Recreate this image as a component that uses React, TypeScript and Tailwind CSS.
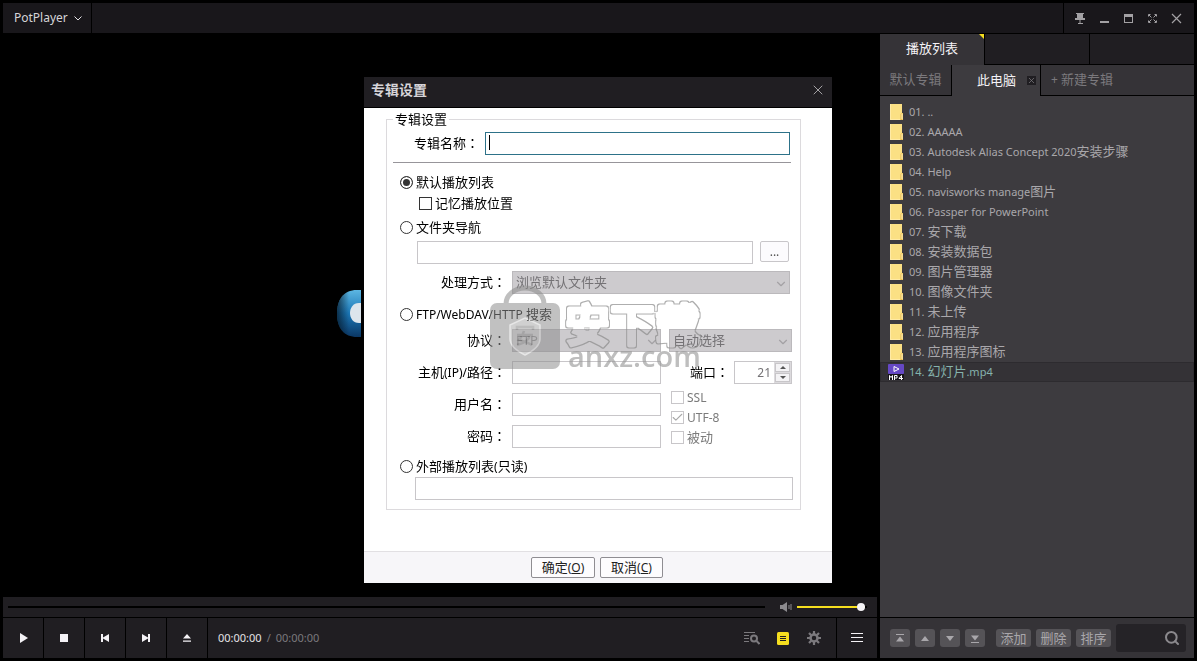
import { useState } from "react";
import type { ReactNode } from "react";
import { Check, ChevronDown, Search, X } from "lucide-react";

const playlist = [
  "..",
  "AAAAA",
  "Autodesk Alias Concept 2020安装步骤",
  "Help",
  "navisworks manage图片",
  "Passper for PowerPoint",
  "安下载",
  "安装数据包",
  "图片管理器",
  "图像文件夹",
  "未上传",
  "应用程序",
  "应用程序图标",
  "幻灯片.mp4",
];

const fieldClass =
  "h-[23px] border border-[#c8c6c9] bg-white px-1 text-[12px] outline-none";
const radioClass =
  "size-[13px] shrink-0 appearance-none rounded-full border border-[#333] bg-white checked:bg-[#333] checked:shadow-[inset_0_0_0_2px_white]";

// Latin runs are set smaller than the Chinese text around them
const Mixed = ({
  children,
  latin = "text-[12px]",
}: {
  children: string;
  latin?: string;
}) => (
  <>
    {children.split(/([\x20-\x7e]+)/).map((part, i) =>
      i % 2 ? (
        <span key={i} className={latin}>
          {part}
        </span>
      ) : (
        part
      ),
    )}
  </>
);

const FieldLabel = ({ id, text }: { id: string; text: string }) => (
  <label htmlFor={id} className="h-5 text-right whitespace-nowrap">
    <Mixed>{text}</Mixed>
    <span className="font-['Noto_Sans_CJK_TC',sans-serif] leading-none">：</span>
  </label>
);

interface RadioRowProps {
  value: string;
  mode: string;
  onSelect: (value: string) => void;
  label: string;
}

const RadioRow = ({ value, mode, onSelect, label }: RadioRowProps) => (
  <label className="ml-[13px] flex h-5 items-center gap-[3px]">
    <input
      type="radio"
      name="mode"
      className={radioClass}
      checked={mode === value}
      onChange={() => onSelect(value)}
    />
    <span>
      <Mixed>{label}</Mixed>
    </span>
  </label>
);

const DisabledSelect = ({
  id,
  label,
  option,
}: {
  id: string;
  label?: string;
  option: string;
}) => (
  <div className="relative h-[23px]">
    <select
      id={id}
      aria-label={label}
      disabled
      className="h-full w-full appearance-none border border-[#bbb9bc] bg-[#cdcbce] px-[3px] pb-px text-[13px] text-[#747275] opacity-100"
    >
      <option>{option}</option>
    </select>
    <ChevronDown
      className="pointer-events-none absolute top-[6px] right-[2px] size-[14px] text-[#a3a1a4]"
      strokeWidth={2}
    />
  </div>
);

const DisabledCheck = ({
  label,
  checked = false,
}: {
  label: string;
  checked?: boolean;
}) => (
  <label className="flex h-5 items-center gap-[3px] text-[#7b7b7b]">
    <span className="relative size-[13px]">
      <input
        type="checkbox"
        disabled
        defaultChecked={checked}
        className="block size-[13px] appearance-none border border-[#c8c6c9] bg-white"
      />
      {checked && (
        <Check className="absolute inset-0 size-[13px] text-[#a9a9a9]" />
      )}
    </span>
    <span>
      <Mixed>{label}</Mixed>
    </span>
  </label>
);

const Watermark = () => (
  <svg
    className="pointer-events-none absolute top-[210px] left-[124px] h-[100px] w-[230px] overflow-visible"
    viewBox="0 0 230 100"
    aria-hidden="true"
  >
    <filter id="outline">
      <feMorphology in="SourceGraphic" operator="erode" radius="1" result="inner" />
      <feComposite in="SourceGraphic" in2="inner" operator="out" />
    </filter>
    <text
      x="77"
      y="55"
      fontSize="45"
      fontWeight="700"
      fill="#8c8c8c"
      stroke="#8c8c8c"
      strokeWidth="5"
      strokeLinejoin="round"
      opacity="0.7"
      filter="url(#outline)"
      className="font-['Noto_Sans_CJK_SC',sans-serif]"
    >
      安下载
    </text>
    <g opacity="0.55">
      <path d="M18 17a19 16 0 0 1 38 0" fill="none" stroke="#8a8a8a" strokeWidth="5" />
      <rect x="2" y="16" width="70" height="66" rx="7" fill="#8f8f8f" />
      <path
        d="M37 31l15 7v14c0 7-7 12-15 16-8-4-15-9-15-16V38z"
        fill="#a9a9a9"
        stroke="#d2d2d2"
        strokeWidth="1.500"
      />
      <path
        d="M29 43v-3h16v3M29 48h16M36 44c-1 4-3 7-5 9 5 1 9 3 13 5M42 48c-1 5-5 8-13 10"
        fill="none"
        stroke="#858585"
        strokeWidth="2.500"
      />
    </g>
    <text
      x="80"
      y="80"
      fontSize="29"
      fontWeight="600"
      fill="#9b9b9b"
      opacity="0.65"
      className="font-['Open_Sans',sans-serif]"
    >
      anxz.com
    </text>
  </svg>
);

const AlbumDialog = () => {
  const [mode, setMode] = useState("default");
  const [remember, setRemember] = useState(false);

  return (
    <div className="pointer-events-none fixed inset-0 flex items-center justify-center pr-px pb-px">
      <section
        role="dialog"
        aria-labelledby="dialog-title"
        className="pointer-events-auto relative flex w-[468px] flex-col bg-white text-[13px] leading-[18px] text-black shadow-[0_0_0_3px_black]"
      >
        <header className="flex h-[31px] items-center justify-between border-b border-black bg-[#201e22] pr-[6px] pb-1 pl-[7px]">
          <h1 id="dialog-title" className="text-[14px] font-bold text-[#d6d4d8]">
            专辑设置
          </h1>
          <button type="button" aria-label="关闭" className="text-[#a3a1a4]">
            <X className="size-4" strokeWidth={1.5} />
          </button>
        </header>

        <fieldset className="mt-[2px] mr-[31px] mb-[41px] ml-[22px] border border-[#dcdadd] pb-[9px]">
          <legend className="ml-[6px] px-[2px]">专辑设置</legend>

          <div className="mt-1 mr-[10px] flex items-center gap-[6px] pl-[27px]">
            <FieldLabel id="album-name" text="专辑名称" />
            <div className="relative flex flex-1">
              <input
                id="album-name"
                className="h-[23px] w-full border border-[#2d7289] bg-white px-1 caret-transparent outline-none"
              />
              <span className="absolute top-[3px] left-[4px] h-[15px] w-px bg-black" />
            </div>
          </div>
          <hr className="mt-[7px] mr-[9px] ml-[6px] border-[#97959a]" />

          <div className="mt-[9px]">
            <RadioRow
              value="default"
              mode={mode}
              onSelect={setMode}
              label="默认播放列表"
            />
          </div>
          <label className="mt-px ml-8 flex h-5 items-center gap-[3px]">
            <input
              type="checkbox"
              className="size-[13px] appearance-none border border-[#333] bg-white checked:bg-[#333]"
              checked={remember}
              onChange={() => setRemember(!remember)}
            />
            记忆播放位置
          </label>

          <div className="mt-1">
            <RadioRow
              value="folder"
              mode={mode}
              onSelect={setMode}
              label="文件夹导航"
            />
          </div>
          <div className="mt-1 mr-[11px] ml-[30px] flex gap-[7px]">
            <input
              aria-label="文件夹"
              disabled
              className={`${fieldClass} min-w-0 flex-1`}
            />
            <button
              type="button"
              className="h-[21px] w-[29px] rounded-[2px] border border-[#c8c6c9] bg-[#fcfbfd] text-[12px] leading-none text-[#555]"
            >
              ...
            </button>
          </div>
          <div className="mt-[7px] mr-[10px] grid grid-cols-[119px_1fr] items-center gap-[6px]">
            <FieldLabel id="handling" text="处理方式" />
            <DisabledSelect id="handling" option="浏览默认文件夹" />
          </div>

          <div className="mt-[10px]">
            <RadioRow
              value="remote"
              mode={mode}
              onSelect={setMode}
              label="FTP/WebDAV/HTTP 搜索"
            />
          </div>
          <div className="mt-[5px] mr-2 grid grid-cols-[119px_149px_1fr] items-center gap-x-[6px]">
            <FieldLabel id="protocol" text="协议" />
            <DisabledSelect id="protocol" option="FTP" />
            <div className="pl-[2px]">
              <DisabledSelect id="encoding" label="编码" option="自动选择" />
            </div>
          </div>

          <div className="mt-[9px] mr-2 flex">
            <div className="grid grid-cols-[119px_149px] items-center gap-x-[6px] gap-y-[9px]">
              <FieldLabel id="host" text="主机(IP)/路径" />
              <input id="host" disabled className={fieldClass} />
              <FieldLabel id="user" text="用户名" />
              <input id="user" disabled className={fieldClass} />
              <FieldLabel id="password" text="密码" />
              <input
                id="password"
                type="password"
                disabled
                className={fieldClass}
              />
            </div>
            <div className="flex-1">
              <div className="flex items-center justify-end gap-[5px]">
                <FieldLabel id="port" text="端口" />
                <div className="flex h-[23px] w-[58px] border border-[#c8c6c9]">
                  <input
                    id="port"
                    disabled
                    defaultValue="21"
                    className="w-0 flex-1 pr-[3px] text-right text-[12px] text-[#747275]"
                  />
                  <div className="flex w-[17px] flex-col gap-px bg-[#dcdadd] p-px">
                    <button
                      type="button"
                      aria-label="增加"
                      className="flex flex-1 items-center justify-center border border-[#c8c6c9] bg-[#f4f3f5]"
                    >
                      <svg viewBox="0 0 6 3" className="h-[3px] w-[6px]">
                        <path d="M0 3L3 0l3 3z" fill="#555" />
                      </svg>
                    </button>
                    <button
                      type="button"
                      aria-label="减少"
                      className="flex flex-1 items-center justify-center border border-[#c8c6c9] bg-[#f4f3f5]"
                    >
                      <svg viewBox="0 0 6 3" className="h-[3px] w-[6px]">
                        <path d="M0 0l3 3 3-3z" fill="#555" />
                      </svg>
                    </button>
                  </div>
                </div>
              </div>
              <div className="mt-[3px] ml-[10px]">
                <DisabledCheck label="SSL" />
                <DisabledCheck label="UTF-8" checked />
                <DisabledCheck label="被动" />
              </div>
            </div>
          </div>

          <div className="mt-2">
            <RadioRow
              value="external"
              mode={mode}
              onSelect={setMode}
              label="外部播放列表(只读)"
            />
          </div>
          <div className="mt-px mr-[7px] ml-7 flex">
            <input
              aria-label="外部播放列表"
              disabled
              className={`${fieldClass} w-full`}
            />
          </div>
        </fieldset>

        <footer className="flex h-8 items-center justify-center gap-[5px] border-t border-[#e2e0e3] bg-[#f7f6f9] pr-[2px]">
          <button
            type="button"
            className="h-[21px] w-16 rounded-[2px] border border-[#8f8d92] bg-[#fdfcfe] leading-none text-[#222]"
          >
            确定<span className="text-[12px]">(<u>O</u>)</span>
          </button>
          <button
            type="button"
            className="h-[21px] w-[63px] rounded-[2px] border border-[#8f8d92] bg-[#fdfcfe] leading-none text-[#222]"
          >
            取消<span className="text-[12px]">(<u>C</u>)</span>
          </button>
        </footer>
        <Watermark />
      </section>
    </div>
  );
};

interface IconButtonProps {
  label: string;
  className: string;
  children: ReactNode;
}

const IconButton = ({ label, className, children }: IconButtonProps) => (
  <button
    type="button"
    aria-label={label}
    className={`flex items-center justify-center ${className}`}
  >
    {children}
  </button>
);

const TitleBar = () => (
  <header className="flex h-[30px] bg-[#19171b]">
    <button
      type="button"
      className="flex items-center gap-[6px] border-r border-black pr-[9px] pl-[11px] text-[12px] text-[#d6d4d8]"
    >
      PotPlayer
      <svg viewBox="0 0 8 5" className="h-[5px] w-2" fill="none" stroke="#e4e2e6">
        <path d="M.5.5L4 4 7.500.5" />
      </svg>
    </button>
    <div className="ml-auto flex border-l border-black pr-[6px] pl-1 text-[#a3a1a4]">
      <IconButton label="置顶" className="w-6">
        <svg viewBox="0 0 12 12" className="size-3" fill="currentColor">
          <path d="M2 1h8v1H9v4h2v2H6.500v3H9v1H4v-1h1.500V8H1V6h2V2H2z" />
        </svg>
      </IconButton>
      <IconButton label="最小化" className="w-6">
        <svg viewBox="0 0 12 12" className="size-3" fill="currentColor">
          <path d="M2 9h9v2H2z" />
        </svg>
      </IconButton>
      <IconButton label="最大化" className="w-6">
        <svg viewBox="0 0 12 12" className="size-3" fill="currentColor">
          <path fillRule="evenodd" d="M2 2h9v9H2zM3 5v5h7V5z" />
        </svg>
      </IconButton>
      <IconButton label="全屏" className="w-6">
        <svg viewBox="0 0 12 12" className="size-3" fill="none" stroke="currentColor">
          <path d="M2.500 4.500v-2h2M8.500 2.500h2v2M10.500 8.500v2h-2M4.500 10.500h-2v-2M3 3l2.500 2.500M10 3L7.500 5.500M10 10L7.500 7.500M3 10l2.500-2.500" />
        </svg>
      </IconButton>
      <IconButton label="关闭" className="w-6">
        <svg viewBox="0 0 12 12" className="size-3" fill="none" stroke="currentColor">
          <path d="M2 2l9 9M11 2l-9 9" strokeWidth="1.200" />
        </svg>
      </IconButton>
    </div>
  </header>
);

const transport = [
  { label: "播放", path: "M5 3l8 5-8 5z" },
  { label: "停止", path: "M4 4h8v8H4z" },
  { label: "上一个", path: "M4 4h2v3.500L12 4v8L6 8.500V12H4z" },
  { label: "下一个", path: "M12 4h-2v3.500L4 4v8l6-3.500V12h2z" },
  { label: "打开", path: "M8 4l4 4.500H4zM4 10.500h8v1.200H4z" },
];

const PlayerControls = () => (
  <div className="bg-[#201e22]">
    <div className="flex h-5 items-center pr-[10px] pl-[5px]">
      <input
        type="range"
        aria-label="进度"
        defaultValue={0}
        className="h-[2px] min-w-0 flex-1 appearance-none bg-black [&::-webkit-slider-thumb]:size-[2px] [&::-webkit-slider-thumb]:appearance-none"
      />
      <svg viewBox="0 0 12 12" className="mr-[5px] ml-[15px] size-3" fill="#8b898d">
        <path d="M0 4h2.500L7 1v10L2.500 8H0zM8.500 4h1v4h-1zM10.500 3h1v6h-1z" />
      </svg>
      <input
        type="range"
        aria-label="音量"
        defaultValue={100}
        className="h-[2px] w-[68px] appearance-none bg-[#f5de1f] [&::-webkit-slider-thumb]:size-2 [&::-webkit-slider-thumb]:appearance-none [&::-webkit-slider-thumb]:rounded-full [&::-webkit-slider-thumb]:bg-[#f4f2f6]"
      />
      <span className="h-[2px] w-[2px] bg-black" />
    </div>
    <div className="flex h-[41px] border-t border-black">
      {transport.map((item) => (
        <IconButton
          key={item.label}
          label={item.label}
          className="w-[41px] border-r border-black text-[#f4f2f6]"
        >
          <svg viewBox="0 0 16 16" className="size-4" fill="currentColor">
            <path d={item.path} />
          </svg>
        </IconButton>
      ))}
      <div className="flex items-center gap-[5px] pt-px pl-[10px] text-[11px] text-[#7b797d]">
        <span className="text-[#e4e2e6]">00:00:00</span>
        <span>/</span>
        <span>00:00:00</span>
      </div>
      <div className="ml-auto flex pr-[7px] text-[#7b797d]">
        <IconButton label="搜索列表" className="w-[31px]">
          <svg viewBox="0 0 16 14" className="h-[14px] w-4" fill="none" stroke="currentColor">
            <path d="M0 1.500h11M0 4.500h5M0 7.500h5M0 10.500h5" />
            <circle cx="10" cy="7.500" r="3" strokeWidth="2" />
            <path d="M12.500 10l3 3" strokeWidth="2" />
          </svg>
        </IconButton>
        <IconButton label="播放列表" className="w-[31px]">
          <svg viewBox="0 0 12 13" className="h-[13px] w-3">
            <rect width="12" height="13" rx="1.500" fill="#f5de1f" />
            <path d="M3 4.500h6M3 6.500h6M3 8.500h6" stroke="#201e22" />
          </svg>
        </IconButton>
        <IconButton label="设置" className="w-[31px]">
          <svg viewBox="0 0 14 14" className="size-[14px]" fill="none" stroke="currentColor">
            <circle cx="7" cy="7" r="3.500" strokeWidth="2.500" />
            <path
              d="M7 0v3M7 11v3M0 7h3M11 7h3M2 2l2.200 2.200M9.800 9.800L12 12M12 2L9.800 4.200M4.200 9.800L2 12"
              strokeWidth="2.200"
            />
          </svg>
        </IconButton>
      </div>
      <IconButton label="菜单" className="w-[41px] border-l border-black">
        <svg viewBox="0 0 12 10" className="h-[10px] w-3" stroke="#f4f2f6">
          <path d="M0 .5h12M0 4.500h12M0 8.500h12" />
        </svg>
      </IconButton>
    </div>
  </div>
);

const FolderIcon = () => (
  <svg viewBox="0 0 14 16" className="h-4 w-[14px]">
    <path d="M0 0h12v9h1v7H0z" fill="#fbe084" />
    <path d="M0 0h1v16H0zM1 15h9v1H1z" fill="#ffeaa5" />
    <path d="M10.500 16v-6l2-1v7z" fill="#e6b94c" />
    <path d="M11.500 10h1v5h-1z" fill="#fff3c4" />
  </svg>
);

const VideoIcon = () => (
  <svg viewBox="0 0 16 16" className="-ml-[2px] h-4 w-4">
    <rect width="16" height="10" rx="1" fill="#6548c4" />
    <path d="M6 2.500l5 2.500-5 2.500z" fill="none" stroke="#fff" />
    <rect y="10" width="16" height="6" fill="#17151a" />
    <path
      d="M1.500 16v-4.500l1.500 2 1.500-2V16M6.500 16v-4.500h2.500v2.500H6.500M13.500 16v-4.500l-2.500 3h4"
      fill="none"
      stroke="#fff"
    />
  </svg>
);

const moveButtons = [
  { label: "置顶", path: "M2 1h8v1H2zM6 3.500l4 5H2z" },
  { label: "上移", path: "M6 3l4 5H2z" },
  { label: "下移", path: "M6 8L2 3h8z" },
  { label: "置底", path: "M2 9h8v1H2zM6 7.500l-4-5h8z" },
];

const Playlist = () => (
  <aside className="flex w-[314px] shrink-0 flex-col bg-[#3d3b3f] text-[13px] text-[#a9a7ab]">
    <nav className="flex h-[31px] bg-[#201e22]">
      <button
        type="button"
        className="relative w-[105px] border-r border-black bg-[#353337] pb-px text-[#f4f2f6]"
      >
        播放列表
        <svg viewBox="0 0 5 5" className="absolute top-0 right-0 size-[5px]">
          <path d="M0 0h5v5z" fill="#f5de1f" />
        </svg>
      </button>
      <span className="w-[105px] border-r border-b border-black" />
      <span className="flex-1 border-b border-black" />
    </nav>
    <nav className="flex h-[31px] bg-[#353337] text-[#7b797d]">
      <button type="button" className="w-18 border-r border-b border-black">
        默认专辑
      </button>
      <div className="flex w-[88px] items-center justify-end gap-[11px] bg-[#3d3b3f] pr-1">
        <button type="button" className="text-[#f4f2f6]">
          此电脑
        </button>
        <IconButton label="关闭专辑" className="size-[9px] bg-[#201e22]">
          <X className="size-[9px]" strokeWidth={2} />
        </IconButton>
      </div>
      <button
        type="button"
        className="flex-1 border-b border-l border-black pl-[10px] text-left"
      >
        <Mixed>+ 新建专辑</Mixed>
      </button>
    </nav>
    <ol className="mt-[6px] flex-1">
      {playlist.map((name, i) => {
        const isVideo = name.endsWith(".mp4");
        return (
          <li
            key={name}
            className={`flex h-5 items-center gap-[5px] pl-[10px] ${
              isVideo
                ? "bg-[#343236] text-[#86b3ad] shadow-[inset_0_0_0_1px_#2d2b2f]"
                : ""
            }`}
          >
            {isVideo ? <VideoIcon /> : <FolderIcon />}
            <span className="whitespace-nowrap">
              <Mixed latin="text-[11px]">
                {`${String(i + 1).padStart(2, "0")}. ${name}`}
              </Mixed>
            </span>
          </li>
        );
      })}
    </ol>
    <footer className="flex h-[41px] items-center gap-[5px] border-t border-black bg-[#353337] pr-2 pl-[10px]">
      {moveButtons.map((item) => (
        <IconButton
          key={item.label}
          label={item.label}
          className="h-[18px] w-5 rounded-[3px] bg-[#555357]"
        >
          <svg viewBox="0 0 12 11" className="h-[11px] w-3" fill="currentColor">
            <path d={item.path} />
          </svg>
        </IconButton>
      ))}
      <div className="ml-[6px] flex gap-[5px]">
        {["添加", "删除", "排序"].map((text) => (
          <button
            key={text}
            type="button"
            className="h-[18px] w-[35px] rounded-[3px] bg-[#555357] leading-none"
          >
            {text}
          </button>
        ))}
      </div>
      <div className="flex h-7 flex-1 items-center rounded-[3px] bg-[#252327] pr-[6px]">
        <input
          aria-label="搜索"
          className="w-0 flex-1 bg-transparent px-2 outline-none"
        />
        <Search className="size-4 text-[#8b898d]" strokeWidth={3} />
      </div>
    </footer>
  </aside>
);

const PotLogo = () => (
  <svg viewBox="0 0 206 48" className="h-12 w-[206px]">
    <defs>
      <linearGradient id="pot" x1="0" y1="0" x2="0" y2="1">
        <stop offset="0" stopColor="#5cb6e2" />
        <stop offset="0.500" stopColor="#1b76b5" />
        <stop offset="1" stopColor="#0b3764" />
      </linearGradient>
      <linearGradient id="edge" x1="0" y1="0" x2="1" y2="0">
        <stop offset="0" stopColor="#04121f" stopOpacity="0.700" />
        <stop offset="0.300" stopColor="#04121f" stopOpacity="0" />
      </linearGradient>
    </defs>
    <path d="M40 0H20C6 0 0 10 0 24s7 23 20 23h20z" fill="url(#pot)" />
    <path d="M40 0H20C6 0 0 10 0 24s7 23 20 23h20z" fill="url(#edge)" />
    <path d="M40 13H22c-6 0-9 5-9 10s3 10 9 10h18z" fill="#dde5ec" />
  </svg>
);

export default () => (
  <div className="flex min-h-screen w-full flex-col gap-px bg-black p-[3px] font-['Noto_Sans','Noto_Sans_CJK_SC',sans-serif]">
    <TitleBar />
    <div className="flex flex-1 gap-[3px]">
      <main className="flex min-w-0 flex-1 flex-col">
        <div className="flex flex-1 items-center justify-center pb-1">
          <PotLogo />
        </div>
        <PlayerControls />
      </main>
      <Playlist />
    </div>
    <AlbumDialog />
  </div>
);
